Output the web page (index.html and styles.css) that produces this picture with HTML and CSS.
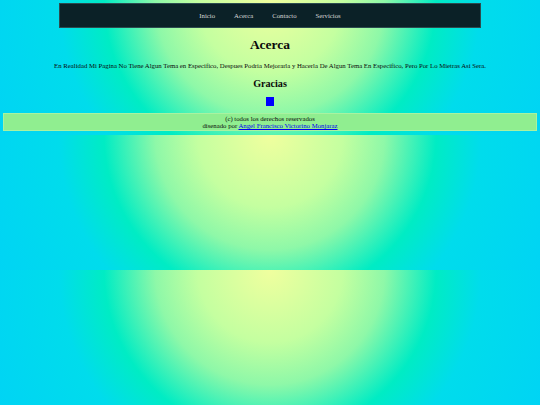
FILE: index.html
```html
<!DOCTYPE html>
<html lang="es">
<head>
<meta charset="utf-8">
<title>Acerca</title>
<link rel="stylesheet" href="styles.css">
</head>
<body class="page">
  <nav class="topnav">
    <a class="topnav-link" href="#">Inicio</a>
    <a class="topnav-link" href="#">Acerca</a>
    <a class="topnav-link" href="#">Contacto</a>
    <a class="topnav-link" href="#">Servicios</a>
  </nav>
  <h1 class="title">Acerca</h1>
  <p class="text">En Realidad Mi Pagina No Tiene Algun Tema en Especifico, Despues Podria Mejorarla y Hacerla De Algun Tema En Especifico, Pero Por Lo Mietras Asi Sera.</p>
  <h2 class="subtitle">Gracias</h2>
  <div class="square"></div>
  <footer class="footer">
    <div>(c) todos los derechos reservados</div>
    <div>disenado por <a class="footer-link" href="#">Angel Francisco Victorino Monjaraz</a></div>
  </footer>
</body>
</html>
```

FILE: styles.css
```css
.page {
  margin: 3.4px;
  font-family: "Liberation Serif", "Times New Roman", serif;
  font-size: 6.75px;
  color: #0a0a0a;
  background: radial-gradient(circle at top, #f0ff9e 0%, #c4ffa0 24%, #8ef8a8 38%, #00ecc4 55%, #00dcec 70%, #00d4f4 100%);
}

.topnav {
  width: 420px;
  height: 22.5px;
  margin: 0 auto;
  background: #0b2127;
  border: 1px solid #2c4b4f;
  display: flex;
  justify-content: center;
  align-items: center;
  gap: 19px;
}

.topnav-link {
  color: #d8d8d8;
  text-decoration: none;
  font-size: 6.75px;
}

.title {
  font-size: 13.5px;
  text-align: center;
  margin: 9px 0;
}

.text {
  text-align: center;
  margin: 9px 0;
}

.subtitle {
  font-size: 10.125px;
  text-align: center;
  margin: 8.4px 0;
}

.square {
  width: 8.4px;
  height: 8.4px;
  background: #0000ff;
  margin: 0 auto;
}

.footer {
  margin-top: 7.5px;
  padding: 1px 0;
  background: #90ee90;
  border: 1px solid #a9f2a0;
  text-align: center;
}

.footer-link {
  color: #0000ee;
}
```
